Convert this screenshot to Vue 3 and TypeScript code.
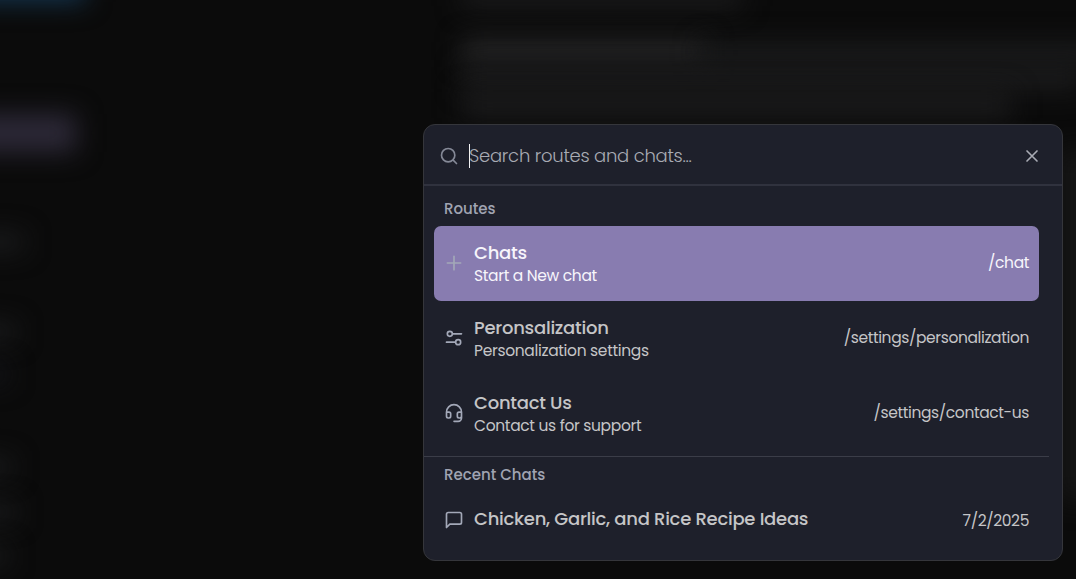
<script setup lang="ts">
interface Entry {
  icon: string
  title: string
  note?: string
  meta: string
  active?: boolean
}

const routes: Entry[] = [
  { icon: 'plus', title: 'Chats', note: 'Start a New chat', meta: '/chat', active: true },
  { icon: 'sliders', title: 'Peronsalization', note: 'Personalization settings', meta: '/settings/personalization' },
  { icon: 'headset', title: 'Contact Us', note: 'Contact us for support', meta: '/settings/contact-us' },
]

const chats: Entry[] = [
  { icon: 'message', title: 'Chicken, Garlic, and Rice Recipe Ideas', meta: '7/2/2025' },
]

const icons: Record<string, string> = {
  search: 'M19 11a8 8 0 1 1-16 0a8 8 0 0 1 16 0M21 21l-4.3-4.3',
  close: 'M18 6 6 18M6 6l12 12',
  plus: 'M4 12h16M12 4v16',
  sliders: 'M10 7a3 3 0 1 1-6 0a3 3 0 0 1 6 0M10 7h11M20 17a3 3 0 1 1-6 0a3 3 0 0 1 6 0M14 17H3',
  headset:
    'M3 11h3a2 2 0 0 1 2 2v3a2 2 0 0 1-2 2H5a2 2 0 0 1-2-2v-5Zm0 0a9 9 0 1 1 18 0m0 0v5a2 2 0 0 1-2 2h-1a2 2 0 0 1-2-2v-3a2 2 0 0 1 2-2h3ZM21 16v2a4 4 0 0 1-4 4h-5',
  message: 'M21 15a2 2 0 0 1-2 2H7l-4 4V5a2 2 0 0 1 2-2h14a2 2 0 0 1 2 2z',
}
</script>

<template>
  <div class="screen">
    <div class="backdrop">
      <i class="glow brand"></i>
      <i class="glow selected"></i>
      <i class="glow side s1"></i>
      <i class="glow side s2"></i>
      <i class="glow side s3"></i>
      <i class="glow side s4"></i>
      <i class="glow side s5"></i>
      <i class="glow side s6"></i>
      <i class="glow line l0"></i>
      <i class="glow line l1"></i>
      <i class="glow line l2"></i>
      <i class="glow line l3"></i>
      <i class="glow line l4"></i>
      <i class="glow edge"></i>
    </div>

    <section class="palette">
      <header class="search">
        <svg class="icon" viewBox="0 0 24 24"><path :d="icons.search" /></svg>
        <div class="field">
          <span class="caret"></span>
          <span class="placeholder">Search routes and chats...</span>
        </div>
        <svg class="icon close" viewBox="0 0 24 24"><path :d="icons.close" /></svg>
      </header>

      <div class="results">
        <h2 class="heading">Routes</h2>
        <div v-for="r in routes" :key="r.title" class="row" :class="{ active: r.active }">
          <svg class="icon" viewBox="0 0 24 24"><path :d="icons[r.icon]" /></svg>
          <div class="text">
            <span class="title">{{ r.title }}</span>
            <span class="note">{{ r.note }}</span>
          </div>
          <span class="meta">{{ r.meta }}</span>
        </div>
        <div class="divider"></div>
        <h2 class="heading recent">Recent Chats</h2>
        <div v-for="c in chats" :key="c.title" class="row short">
          <svg class="icon" viewBox="0 0 24 24"><path :d="icons[c.icon]" /></svg>
          <div class="text">
            <span class="title">{{ c.title }}</span>
          </div>
          <span class="meta">{{ c.meta }}</span>
        </div>
      </div>
    </section>
  </div>
</template>

<style>
body {
  margin: 0;
  background: #0b0b0b;
}
</style>

<style scoped>
.screen {
  position: relative;
  box-sizing: border-box;
  width: 1076px;
  height: 579px;
  padding: 124px 0 0 423px;
  overflow: hidden;
  background: #0b0b0b;
  font-family: Poppins, Inter, "Noto Sans", sans-serif;
}

.backdrop {
  position: absolute;
  inset: 0;
}

.glow {
  position: absolute;
  display: block;
  filter: blur(13px);
}

.brand { left: -40px; top: -30px; width: 125px; height: 32px; background: #143550; }
.selected { left: -40px; top: 114px; width: 116px; height: 38px; background: #2d2938; }
.side { left: -30px; width: 46px; height: 16px; background: #1d1e20; }
.s1 { top: 234px; width: 54px; }
.s2 { top: 324px; }
.s3 { top: 366px; width: 38px; background: #15161c; }
.s4 { top: 459px; width: 42px; }
.s5 { top: 504px; }
.s6 { top: 548px; width: 38px; }
.line { left: 462px; background: #1b1b1c; }
.l0 { top: -14px; width: 280px; height: 22px; }
.l1 { top: 40px; width: 245px; height: 22px; background: #282829; }
.l2 { left: 700px; top: 42px; width: 420px; height: 22px; background: #1b1c1d; }
.l3 { top: 66px; width: 620px; height: 24px; background: #1c1c1d; }
.l4 { top: 92px; width: 550px; height: 26px; background: #1b1b1c; }
.edge { left: 1056px; top: 150px; width: 50px; height: 350px; background: #151515; }

.palette {
  position: relative;
  box-sizing: border-box;
  width: 640px;
  height: 437px;
  border: 1px solid #35363b;
  border-radius: 12px;
  background: #1e202b;
  color: #c5c5c7;
}

.search {
  display: flex;
  align-items: center;
  box-sizing: border-box;
  height: 61px;
  padding: 2px 20px 0 15px;
  border-bottom: 2px solid #30323e;
}

.icon {
  flex: none;
  width: 20px;
  height: 20px;
  fill: none;
  stroke: #a3a8b8;
  stroke-width: 2;
  stroke-linecap: round;
  stroke-linejoin: round;
}

.search .icon {
  stroke: #858997;
}

.search .close {
  stroke: #a9abb4;
}

.field {
  display: flex;
  flex: 1;
  align-items: center;
  padding-left: 10px;
}

.caret {
  width: 1px;
  height: 24px;
  margin-right: -1px;
  background: #f2f2f4;
}

.placeholder {
  font-size: 18px;
  font-weight: 300;
  line-height: 28px;
  letter-spacing: -0.26px;
  color: #a8abb4;
  white-space: nowrap;
}

.results {
  padding: 8px 23px 0 10px;
}

.heading {
  margin: 0;
  padding: 3px 0 0 10px;
  box-sizing: border-box;
  height: 32px;
  font-size: 15px;
  font-weight: 500;
  line-height: 24px;
  color: #a0a4b2;
}

.row {
  display: flex;
  align-items: center;
  box-sizing: border-box;
  height: 75px;
  padding: 0 10px 2px;
  border-radius: 7px;
}

.row.active {
  background: #887cb0;
  color: #f7f5fb;
}

.text {
  display: flex;
  flex: 1;
  flex-direction: column;
  align-items: flex-start;
  padding: 3px 0 0 10px;
}

.title {
  font-size: 18px;
  font-weight: 500;
  line-height: 23px;
  letter-spacing: -0.26px;
  white-space: nowrap;
}

.note,
.meta {
  font-size: 15.5px;
  line-height: 23px;
  letter-spacing: -0.33px;
  white-space: nowrap;
}

.meta {
  letter-spacing: -0.38px;
}

.divider {
  height: 1px;
  margin: 5px -10px 0;
  background: #3b3d48;
}

.recent {
  height: 37px;
  padding-top: 6px;
}

.row.short {
  height: 52px;
  padding-bottom: 0;
}

.short .text {
  padding: 0 0 4px 10px;
}
</style>
